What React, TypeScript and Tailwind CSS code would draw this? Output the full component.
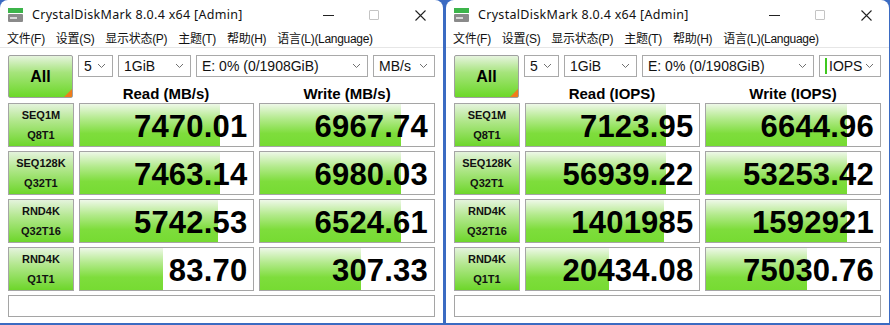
import React from "react";

type Row = {
  l1: string;
  l2: string;
  read: string;
  write: string;
  rw: number;
  ww: number;
};

const rowsMB: Row[] = [
  { l1: "SEQ1M", l2: "Q8T1", read: "7470.01", write: "6967.74", rw: 81, ww: 81 },
  { l1: "SEQ128K", l2: "Q32T1", read: "7463.14", write: "6980.03", rw: 81, ww: 81 },
  { l1: "RND4K", l2: "Q32T16", read: "5742.53", write: "6524.61", rw: 79.5, ww: 81 },
  { l1: "RND4K", l2: "Q1T1", read: "83.70", write: "307.33", rw: 48, ww: 58 },
];

const rowsIO: Row[] = [
  { l1: "SEQ1M", l2: "Q8T1", read: "7123.95", write: "6644.96", rw: 81, ww: 81 },
  { l1: "SEQ128K", l2: "Q32T1", read: "56939.22", write: "53253.42", rw: 81, ww: 81 },
  { l1: "RND4K", l2: "Q32T16", read: "1401985", write: "1592921", rw: 79.5, ww: 81 },
  { l1: "RND4K", l2: "Q1T1", read: "20434.08", write: "75030.76", rw: 48, ww: 58 },
];

const menus = ["文件(F)", "设置(S)", "显示状态(P)", "主题(T)", "帮助(H)", "语言(L)(Language)"];

const Chevron = () => (
  <svg width="9" height="6" viewBox="0 0 9 6" className="shrink-0">
    <path d="M1 1 L4.5 4.5 L8 1" fill="none" stroke="#707070" strokeWidth="1" />
  </svg>
);

const Select = ({ text, w, focus }: { text: string; w: string; focus?: boolean }) => (
  <div className={`${w} h-[22px] border border-[#a9a9a9] bg-white flex items-center pl-[5px] pr-[6px] justify-between`}>
    <div className="flex items-center gap-[2px]">
      {focus && <div className="w-[2px] h-[16px] bg-[#3fc81e]" />}
      <span className="text-[14px] leading-none text-[#111]">{text}</span>
    </div>
    <Chevron />
  </div>
);

const Cell = ({ value, pct }: { value: string; pct: number }) => (
  <div className="relative w-[176px] h-full border border-[#a5a5a5] bg-white overflow-hidden">
    <div
      className="absolute left-0 top-0 bottom-0 bg-[linear-gradient(to_bottom,#eef8e8_0%,#b3ea8c_35%,#7edd3c_70%,#76db32_100%)]"
      style={{ width: `${pct}%` }}
    />
    <div className="relative h-full flex items-center justify-end pr-[6px] pt-[3px] text-[31px] font-bold leading-none text-black tracking-[0.2px]">
      {value}
    </div>
  </div>
);

const Window = ({ unit, rows, focus }: { unit: string; rows: Row[]; focus?: boolean }) => (
  <div className="w-[443px] h-[323px] shrink-0 bg-white rounded-t-[8px] flex flex-col overflow-hidden font-['Liberation_Sans','Noto_Sans_CJK_SC',sans-serif]">
    <div className="h-[30px] flex items-center pl-[8px]">
      <svg width="15" height="14" viewBox="0 0 15 14">
        <rect x="0" y="0" width="15" height="5" fill="#3cb44a" />
        <rect x="0" y="6" width="15" height="8" rx="1" fill="#8a8a8a" />
        <rect x="2" y="9" width="7" height="2" fill="#d8d8d8" />
      </svg>
      <span className="ml-[9px] text-[12.5px] text-[#111] font-['Noto_Sans',sans-serif] tracking-[0.3px]">
        CrystalDiskMark 8.0.4 x64 [Admin]
      </span>
      <div className="ml-auto flex items-center">
        <div className="w-[46px] flex justify-center">
          <div className="w-[11px] h-[1px] bg-[#222]" />
        </div>
        <div className="w-[46px] flex justify-center">
          <div className="w-[10px] h-[10px] border border-[#c4c4c4] rounded-[1px]" />
        </div>
        <div className="w-[46px] flex justify-center">
          <svg width="11" height="11" viewBox="0 0 11 11">
            <path d="M0.5 0.5 L10.5 10.5 M10.5 0.5 L0.5 10.5" stroke="#222" strokeWidth="1.1" />
          </svg>
        </div>
      </div>
    </div>
    <div className="h-[17px] flex items-center pl-[7px] gap-[11px] text-[12px] tracking-[-0.3px] text-[#111] font-['Liberation_Sans','Noto_Sans_CJK_SC',sans-serif]">
      {menus.map((m) => (
        <span key={m}>{m}</span>
      ))}
    </div>
    <div className="flex-1 border-t border-[#e6e6e6] px-[8px] pt-[7px] flex flex-col">
      <div className="flex gap-[5px]">
        <div className="relative w-[66px] h-[43px] border border-[#a0a0a0] rounded-[2px] bg-[linear-gradient(to_bottom,#e6f4de_0%,#a6e47c_40%,#6cd828_100%)] flex items-center justify-center overflow-hidden">
          <span className="text-[16px] font-bold text-black">All</span>
          <div className="absolute right-0 bottom-0 w-0 h-0 border-l-[8px] border-l-transparent border-b-[8px] border-b-[#f07c1c]" />
        </div>
        <div className="flex flex-col">
          <div className="flex gap-[5px]">
            <Select text="5" w="w-[35px]" />
            <Select text="1GiB" w="w-[73px]" />
            <Select text="E: 0% (0/1908GiB)" w="w-[172px]" />
            <Select text={unit === "MB/s" ? "MB/s" : "IOPS"} w="w-[62px]" focus={focus} />
          </div>
          <div className="flex gap-[5px] h-[21px] items-start">
            <div className="w-[176px] text-center text-[15px] leading-[15px] font-bold text-black pt-[9px]">Read ({unit})</div>
            <div className="w-[176px] text-center text-[15px] leading-[15px] font-bold text-black pt-[9px]">Write ({unit})</div>
          </div>
        </div>
      </div>
      <div className="flex flex-col gap-[4px] mt-[5px]">
        {rows.map((r, i) => (
          <div key={i} className="flex gap-[5px] h-[44px]">
            <div className="w-[66px] h-full border border-[#a5a5a5] bg-[linear-gradient(to_bottom,#e4f3dc_0%,#b2e78d_40%,#6dd62a_100%)] flex flex-col items-center justify-center gap-[9px] text-[11px] font-bold leading-none text-[#111]">
              <span>{r.l1}</span>
              <span>{r.l2}</span>
            </div>
            <Cell value={r.read} pct={r.rw} />
            <Cell value={r.write} pct={r.ww} />
          </div>
        ))}
      </div>
      <div className="mt-[4px] h-[22px] border border-[#a5a5a5] bg-white" />
    </div>
  </div>
);

export default function App() {
  return (
    <div className="w-[890px] h-[325px] bg-[#3b6bc2] flex gap-[3px] overflow-hidden">
      <Window unit="MB/s" rows={rowsMB} />
      <Window unit="IOPS" rows={rowsIO} focus />
    </div>
  );
}
